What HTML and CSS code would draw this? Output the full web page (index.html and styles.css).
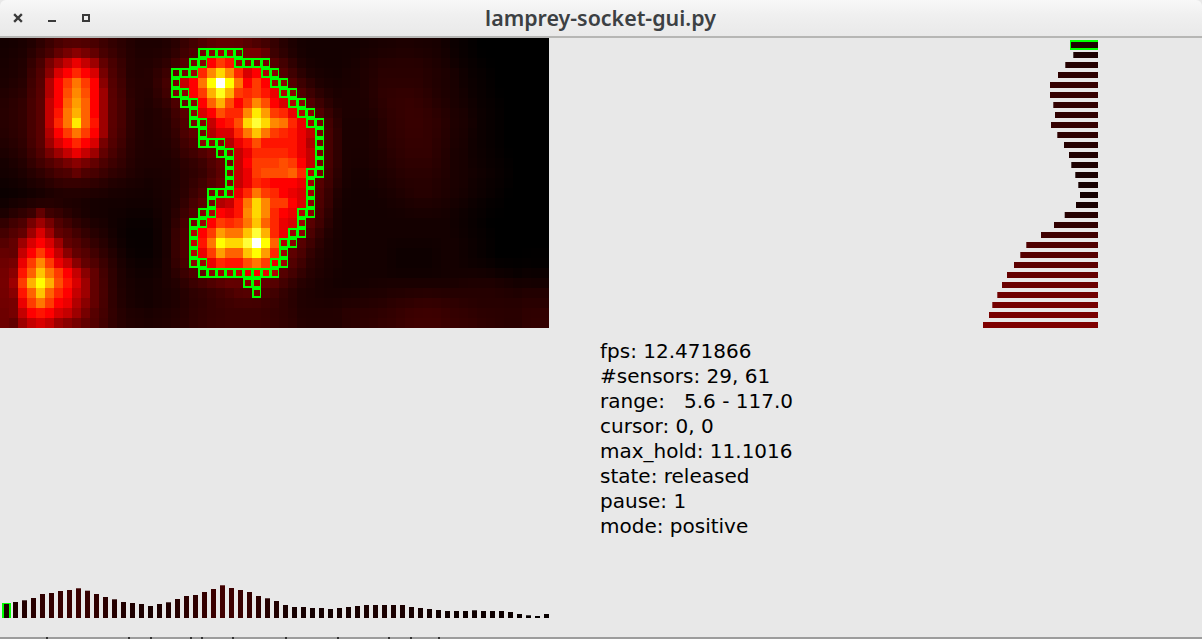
FILE: index.html
```html
<!DOCTYPE html>
<html lang="en">
<head>
<meta charset="utf-8">
<title>lamprey-socket-gui.py</title>
<link rel="stylesheet" href="styles.css">
</head>
<body>
<div class="window">
  <header class="titlebar">
    <div class="controls">
      <svg class="ctl" viewBox="0 0 8 8"><path d="M1 1L7 7M7 1L1 7" class="ctl-line ctl-close"/></svg>
      <svg class="ctl" viewBox="0 0 8 8"><path d="M0 7H8" class="ctl-line"/></svg>
      <svg class="ctl" viewBox="0 0 8 8"><rect x="1" y="1" width="6" height="6" class="ctl-line"/></svg>
    </div>
    <div class="title">lamprey-socket-gui.py</div>
    <div class="controls-spacer"></div>
  </header>
  <main class="content">
    <div class="heatmap" id="heatmap"></div>
    <div class="side"><svg id="rows" class="chart-rows" width="130" height="290"></svg></div>
    <div class="hist"><svg id="cols" class="chart-cols" width="549" height="40"></svg></div>
    <pre class="readout">fps: 12.471866
#sensors: 29, 61
range:   5.6 - 117.0
cursor: 0, 0
max_hold: 11.1016
state: released
pause: 1
mode: positive</pre>
  </main>
  <div class="status"></div>
</div>
<script src="app.js"></script>
</body>
</html>
```
FILE: styles.css
```css
html, body {
  margin: 0;
  padding: 0;
  background: #e8e8e8;
}
.window {
  width: 1202px;
  height: 639px;
  display: flex;
  flex-direction: column;
  overflow: hidden;
  background: #e8e8e8;
}
.titlebar {
  flex: none;
  height: 38px;
  box-sizing: border-box;
  border-bottom: 2px solid #b6b6b4;
  border-radius: 6px 6px 0 0;
  background: linear-gradient(#f8f8f8, #f0f0f0 40%, #e9e9e9);
  display: grid;
  grid-template-columns: 1fr auto 1fr;
  align-items: center;
}
.controls {
  display: flex;
  gap: 26px;
  padding-left: 14px;
}
.ctl {
  width: 8px;
  height: 8px;
  display: block;
  overflow: visible;
}
.ctl-line {
  fill: none;
  stroke: #3a3a3a;
  stroke-width: 2;
}
.ctl-close {
  stroke-width: 2.4;
  stroke-linecap: square;
}
.title {
  margin-left: -1px;
  font-family: "Noto Sans", "Open Sans", sans-serif;
  font-weight: 600;
  font-size: 21.4px;
  line-height: 26px;
  color: #3c4043;
}
.content {
  flex: 1;
  min-height: 0;
  display: grid;
  grid-template-columns: 549px 1fr;
  grid-template-rows: 290px 1fr;
}
.heatmap {
  display: grid;
  grid-template-columns: repeat(61, 9px);
  grid-template-rows: repeat(29, 10px);
}
.cell {
  display: block;
  box-sizing: border-box;
}
.cell.edge {
  border-style: solid;
  border-color: #00ff00;
  border-width: 2px 1px 2px 2px;
}
.side {
  display: flex;
  justify-content: flex-end;
  padding-right: 104px;
}
.chart-rows, .chart-cols {
  display: block;
}
.hist {
  display: flex;
  flex-direction: column;
  justify-content: flex-end;
  padding-bottom: 19px;
}
.readout {
  margin: 0;
  padding: 11px 0 0 51px;
  font-family: "DejaVu Sans", sans-serif;
  font-size: 20px;
  line-height: 25px;
  color: #000;
  white-space: pre;
}
.status {
  flex: none;
  height: 2px;
  background:
    linear-gradient(#333, #333) 46px 0 / 2px 2px no-repeat,
    linear-gradient(#333, #333) 128px 0 / 2px 2px no-repeat,
    linear-gradient(#333, #333) 150px 0 / 2px 2px no-repeat,
    linear-gradient(#333, #333) 190px 0 / 2px 2px no-repeat,
    linear-gradient(#333, #333) 201px 0 / 2px 2px no-repeat,
    linear-gradient(#333, #333) 232px 0 / 2px 2px no-repeat,
    linear-gradient(#333, #333) 285px 0 / 2px 2px no-repeat,
    linear-gradient(#333, #333) 337px 0 / 2px 2px no-repeat,
    linear-gradient(#333, #333) 388px 0 / 2px 2px no-repeat,
    linear-gradient(#333, #333) 410px 0 / 2px 2px no-repeat,
    linear-gradient(#333, #333) 438px 0 / 2px 2px no-repeat,
    #9c9c9c;
}
```
FILE: app.js
```js
// Sensor frame: one base-36 digit per cell (0 = black, z = white), 29 rows x 61 columns.
var FRAME = [
  "111122333322 2221112 22233443332211111 1111111111111110000000000",
  "111224567654 3222112 23467886665421111 1111112222221110000000000",
  "1122368aca85 3222122 3367dge8766431111 1111222222222111000000000",
  "112237bdfdb6 3222122 568fkokfbd9743211 1111222222222111100000000",
  "112239dgjgd7 3222123 6adjqzqjdgd873221 2111222232222211100000000",
  "122349dhkhd8 4322122 67dgmrmgfgec97322 2111222333222111100000000",
  "22234adilid8 4322112 357dimhdgkhdb9732 2211222333322211110000000",
  "22234aejmid8 4322112 337bdhffkplgfc973 2211122233332221110000000",
  "22234afjpie8 4322112 3367adehosokjfc86 2211122233332221110000000",
  "222349dgjgd8 4322112 33469bbfjnjgfeca6 2211122233332221110000000",
  "122348bdfdb6 3322112 2347779ceheeeec96 2211122223332211110000000",
  "1123468aca85 3222112 2234467acffffeca6 2211122223332211110000000",
  "112234567654 3222112 2223346adggghgda6 2211112222332211111000000",
  "011233345433 2222111 2223347acghhhif96 2211112222222211111000000",
  "111122233322 2211111 2223347acfedddc84 2111111222222211111000000",
  "011111222211 1111111 2233678cfjgfdcb84 2111111122222211110000000",
  "000111111111 1111111 223469aejokggdb73 1111111112222111110000000",
  "123453321111 1111011 22379dcekokfdc973 1111111111111111000000000",
  "124686432211 1100011 2368dgfgjnifcb843 1111111111111111000000000",
  "2358b8543321 1100011 239dgljjnsmfc8732 1111111111111111100000000",
  "348bdb854332 1100011 23aejqooszqi97332 1111111111111111100000000",
  "35adgda75432 2100011 239cgliinqlf84322 1111111110011111100000000",
  "46cgkgca7543 2110011 2378cfeehjgc83322 1111111110011111100000001",
  "47einjgda753 2111111 2345789acdc943222 1111111111111111111110001",
  "48gmqmheb853 2111111 22233445785422221 1111111111111111222111112",
  "47einifda853 2111111 22233344464322211 1111122222222222222222122",
  "46cgjgdc9753 2211111 22223333333322211 2222222223333322222222223",
  "46adedba8643 2211111 22223333333322221 2222222233333332222222223",
  "458aba876543 2222222 22333333333332221 2222333333443333333222234"
];

// Contour of the detected blob: row -> columns.
var CONTOUR = {
  1: [22, 23, 24, 25, 26],
  2: [21, 22, 26, 27, 28, 29],
  3: [19, 20, 21, 29, 30],
  4: [19, 30, 31],
  5: [19, 20, 31, 32],
  6: [20, 21, 32, 33],
  7: [21, 33, 34],
  8: [21, 22, 34, 35],
  9: [22, 35],
  10: [22, 23, 24, 35],
  11: [24, 25, 35],
  12: [25, 35],
  13: [25, 34, 35],
  14: [25, 34],
  15: [23, 24, 25, 34],
  16: [23, 34],
  17: [22, 23, 33, 34],
  18: [21, 22, 33],
  19: [21, 32, 33],
  20: [21, 31, 32],
  21: [21, 31],
  22: [21, 22, 30, 31],
  23: [22, 23, 24, 25, 26, 27, 28, 29, 30],
  24: [27, 28],
  25: [28]
};

// Left edge of each row profile bar (right edge is 1098 in the window).
var ROW_LEFT = [1071, 1073.3, 1065.3, 1058, 1050, 1050, 1053.3, 1055, 1051, 1057.3,
  1064, 1069, 1071.3, 1075.3, 1078.3, 1080, 1076, 1064.7, 1054, 1041,
  1026.3, 1020.3, 1014, 1007, 1002, 997.3, 992.3, 989, 983];

// Top edge of each column profile bar (bottom edge is 618 in the window).
var COL_TOP = [604, 602, 600.3, 598, 594, 593, 591, 590, 588.3, 590.7,
  594, 597, 599.3, 602, 603, 604, 606, 604, 602.3, 599,
  596, 595, 592, 589, 585.3, 588, 590, 592, 596, 598.3,
  601, 605, 607, 607, 608, 608, 609, 608, 607, 606,
  605, 605, 605, 605, 605, 607, 608, 609, 610, 611,
  611, 611, 610.3, 611, 611, 611, 612, 614, 615.3, 616, 614];

var SVGNS = "http://www.w3.org/2000/svg";

function hot(i) {
  var r = Math.min(255, Math.round(i * 255 / 13));
  var g = Math.max(0, Math.min(255, Math.round((i - 13) * 255 / 13)));
  var b = Math.max(0, Math.min(255, Math.round((i - 26) * 255 / 9)));
  return "rgb(" + r + "," + g + "," + b + ")";
}

function rect(svg, x, y, w, h, fill) {
  var n = document.createElementNS(SVGNS, "rect");
  n.setAttribute("x", x);
  n.setAttribute("y", y);
  n.setAttribute("width", w);
  n.setAttribute("height", h);
  n.setAttribute("fill", fill);
  svg.appendChild(n);
}

function red(amount) {
  return "rgb(" + Math.min(255, Math.round(amount)) + ",0,0)";
}

function parseFrame() {
  return FRAME.map(function (line) {
    return line.replace(/ /g, "").split("").map(function (c) {
      return parseInt(c, 36);
    });
  });
}

// The frame digits are coarse at the dark end: smooth them with their neighbours.
function smoothed(grid, row, col) {
  var sum = 0, n = 0;
  for (var dr = -1; dr <= 1; dr++) {
    for (var dc = -2; dc <= 2; dc++) {
      var line = grid[row + dr];
      if (line && line[col + dc] !== undefined) {
        sum += Math.min(line[col + dc], 7);
        n++;
      }
    }
  }
  return sum / n;
}

function drawHeatmap() {
  var host = document.getElementById("heatmap");
  var grid = parseFrame();
  grid.forEach(function (line, row) {
    var edge = CONTOUR[row] || [];
    line.forEach(function (value, col) {
      var onEdge = edge.indexOf(col) >= 0;
      var cell = document.createElement("div");
      cell.className = onEdge ? "cell edge" : "cell";
      var level = !onEdge && value <= 4 ? smoothed(grid, row, col) : value;
      cell.style.background = hot(level);
      host.appendChild(cell);
    });
  });
}

function drawRows() {
  var svg = document.getElementById("rows");
  var originX = 1098 - 130;
  rect(svg, 1070 - originX, 2, 29, 10, "#00ff00");
  ROW_LEFT.forEach(function (left, row) {
    var w = 1098 - left;
    rect(svg, left - originX, 4 + row * 10, w, 6, red(w * 1.1));
  });
}

function drawCols() {
  var svg = document.getElementById("cols");
  var originY = 618 - 40;
  rect(svg, 2, 603 - originY, 9, 15.5, "#00ff00");
  COL_TOP.forEach(function (top, col) {
    var h = 618 - top;
    rect(svg, 4 + col * 9, top - originY, 5, h, red(h * 2));
  });
}

drawHeatmap();
drawRows();
drawCols();
```
